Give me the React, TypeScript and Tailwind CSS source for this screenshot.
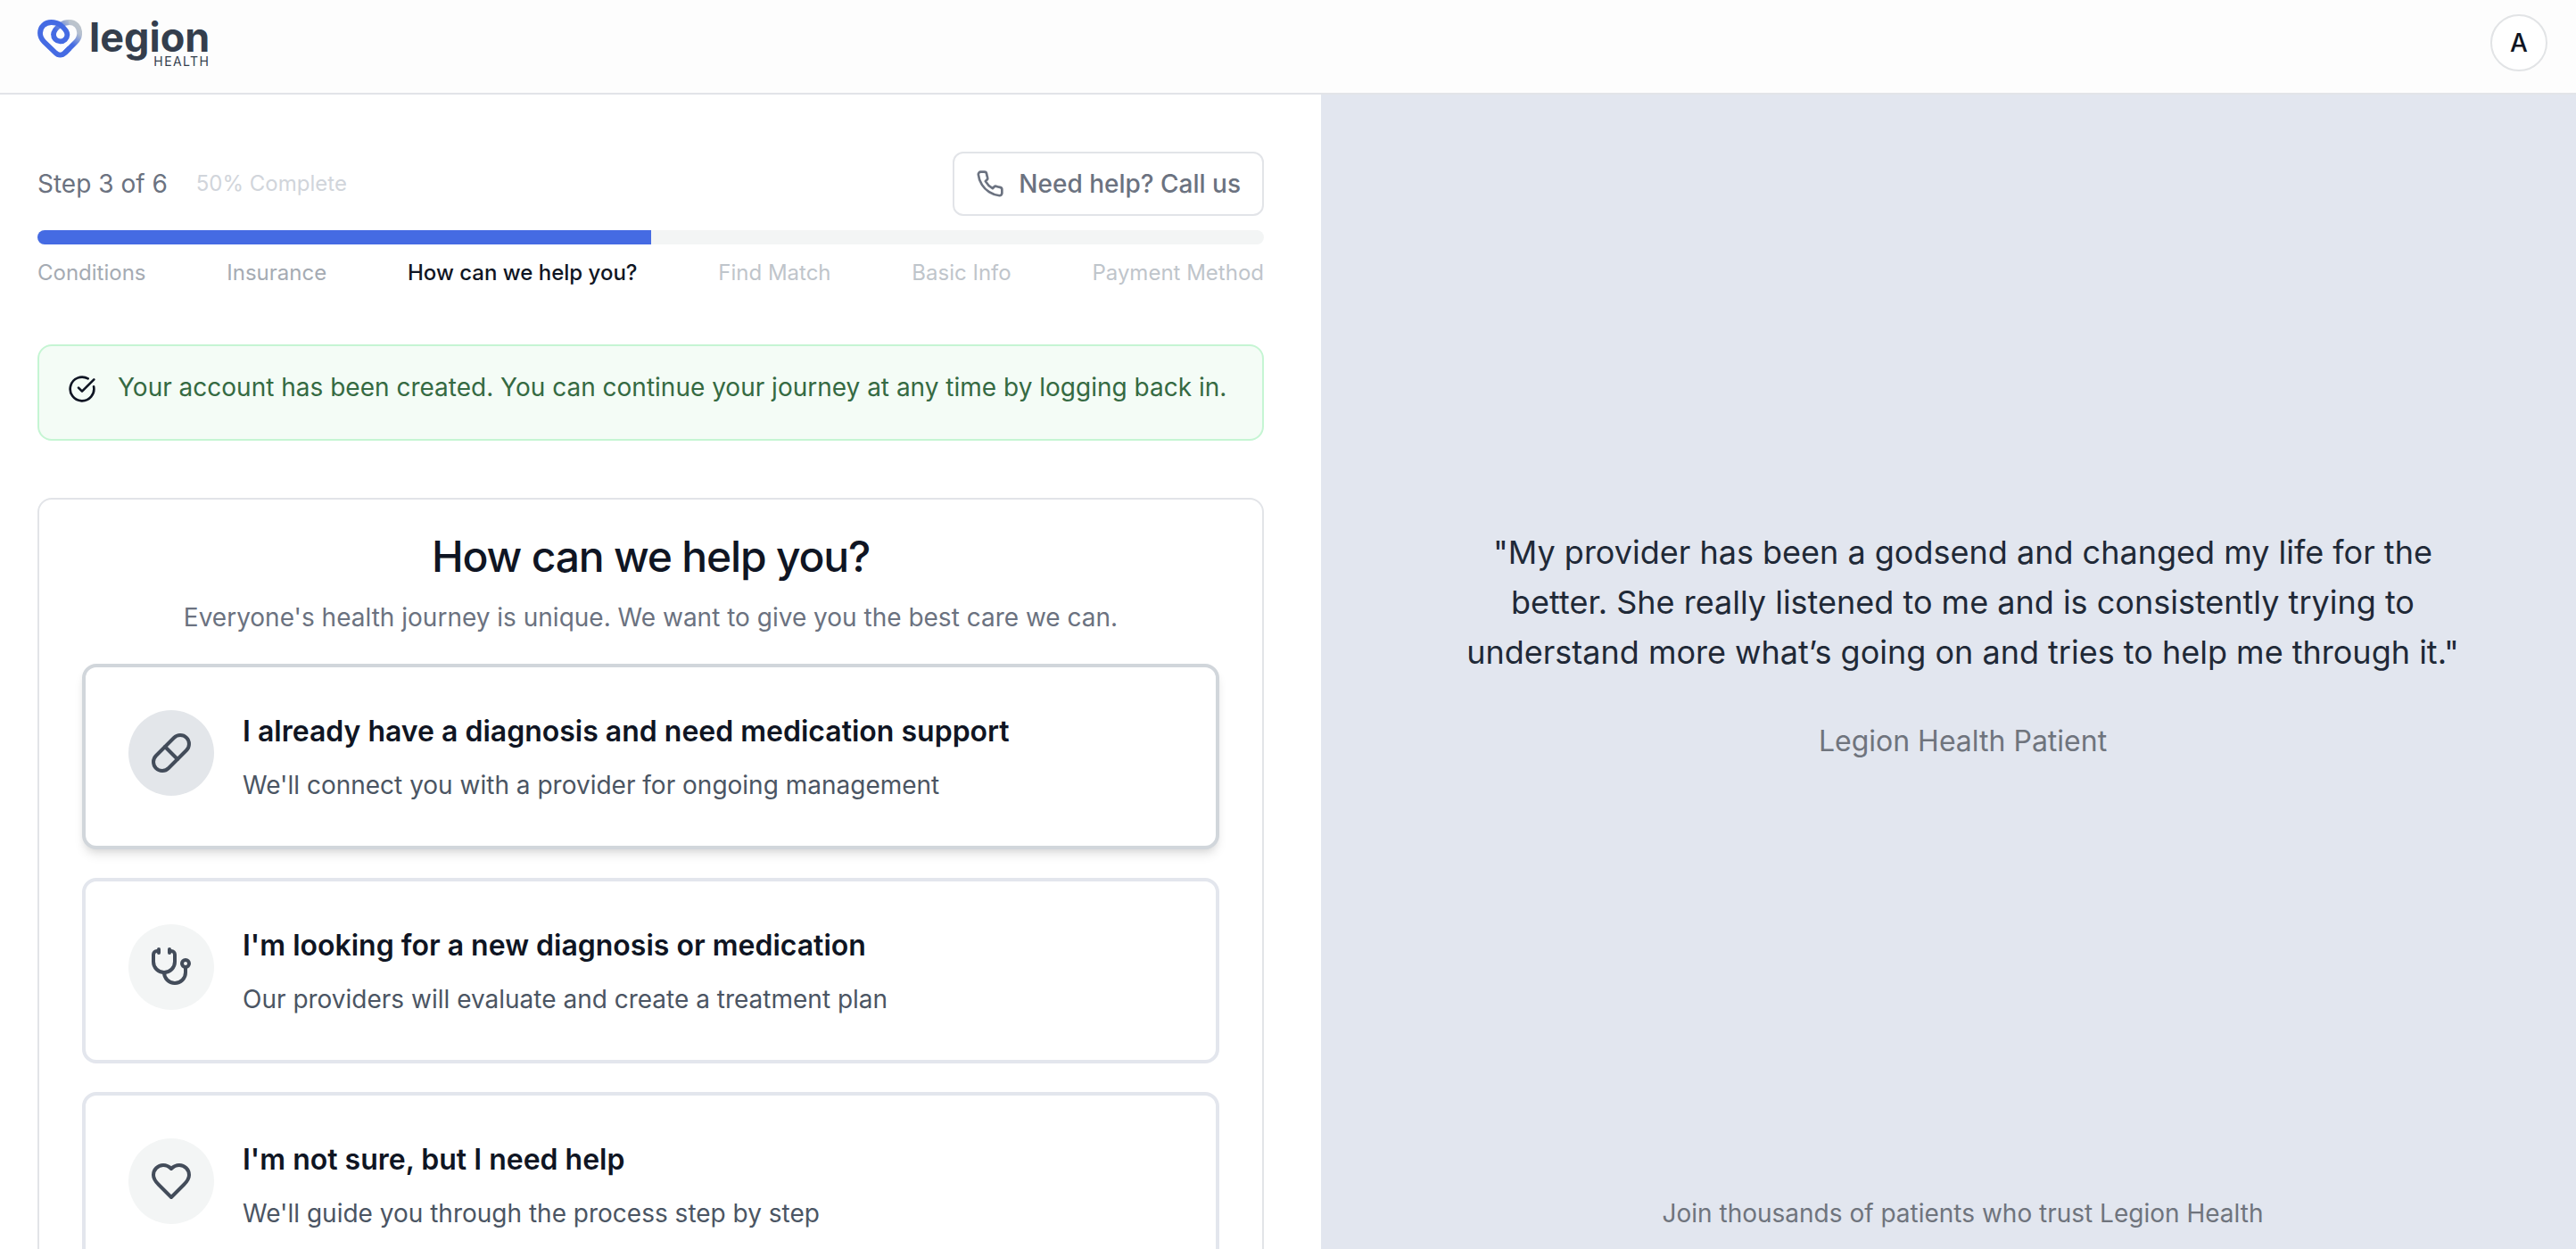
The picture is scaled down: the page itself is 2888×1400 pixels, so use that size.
import { useState, type ReactNode } from "react";
import { clsx } from "clsx";
import { CircleCheckBig, Pill, Stethoscope } from "lucide-react";

const steps = ["Conditions", "Insurance", "How can we help you?", "Find Match", "Basic Info", "Payment Method"];
const currentStep = 3;

function HeartIcon() {
  return (
    <svg viewBox="0 0 24 24" className="size-12" fill="none" stroke="currentColor" strokeWidth="2" strokeLinecap="round" strokeLinejoin="round" aria-hidden="true">
      <path d="M19 14c1.49-1.46 3-3.21 3-5.5A5.5 5.5 0 0 0 16.5 3c-1.76 0-3 .5-4.5 2-1.5-1.5-2.74-2-4.5-2A5.5 5.5 0 0 0 2 8.5c0 2.3 1.5 4.05 3 5.5l7 7Z" />
    </svg>
  );
}

function PhoneIcon() {
  return (
    <svg viewBox="0 0 24 24" className="size-8" fill="none" stroke="currentColor" strokeWidth="2" strokeLinecap="round" strokeLinejoin="round" aria-hidden="true">
      <path d="M22 16.92v3a2 2 0 0 1-2.18 2 19.79 19.79 0 0 1-8.63-3.07 19.5 19.5 0 0 1-6-6 19.79 19.79 0 0 1-3.07-8.67A2 2 0 0 1 4.11 2h3a2 2 0 0 1 2 1.72 12.84 12.84 0 0 0 .7 2.81 2 2 0 0 1-.45 2.11L8.09 9.91a16 16 0 0 0 6 6l1.27-1.27a2 2 0 0 1 2.11-.45 12.84 12.84 0 0 0 2.81.7A2 2 0 0 1 22 16.92z" />
    </svg>
  );
}

function Logo() {
  return (
    <a href="#" className="flex items-start text-[#343e4d]">
      <svg viewBox="0 0 50 43" className="mt-1.5 h-[43px] w-[50px]" fill="none" aria-hidden="true">
        <defs>
          <linearGradient id="heart" gradientUnits="userSpaceOnUse" x1="46" y1="8" x2="34" y2="24">
            <stop offset="0" stopColor="#bcc4cc" />
            <stop offset="0.3" stopColor="#b4bfd0" />
            <stop offset="1" stopColor="#456be3" />
          </linearGradient>
          <linearGradient id="loop" gradientUnits="userSpaceOnUse" x1="36" y1="0" x2="22" y2="14">
            <stop offset="0" stopColor="#bcc4cc" />
            <stop offset="1" stopColor="#456be3" />
          </linearGradient>
        </defs>
        <g strokeWidth="5.8" strokeLinejoin="round">
          <path d="M35.5 3c7 0 11.7 5 11.7 12 0 4-1.2 7-4.200 10L30.5 37.5" stroke="url(#heart)" />
          <path d="M35.8 3c-3.8 0-6.8.8-10.1 3C21.5 9 18 12.5 18 17" stroke="url(#loop)" />
          <path d="M18 16.5a7.7 7.7 0 0 0 15.4.5C33.4 12.5 29.5 9 25.7 6 22.5 3.7 19 3 15.5 3 8.5 3 3 8 3 15c0 4 1.500 7 4.500 10L20 37c3.500 3.600 7.500 3.600 11 0l5-5" stroke="#456be3" />
        </g>
      </svg>
      <span className="ml-2 flex flex-col items-end">
        <span className="text-[45px] leading-[52px] font-bold">legion</span>
        <span className="-mt-1 text-[14px] leading-[10px] tracking-widest">HEALTH</span>
      </span>
    </a>
  );
}

function Progress() {
  return (
    <section>
      <div className="flex items-center justify-between">
        <div className="flex items-center gap-8">
          <span className="text-[28px] leading-10 text-[#6b7280]">Step {currentStep} of {steps.length}</span>
          <span className="text-2xl text-[#d1d5db]">50% Complete</span>
        </div>
        <button type="button" className="flex h-[72px] items-center gap-4 rounded-xl border-2 border-[#e2e4e8] px-6 text-[28px] font-medium text-[#6b7280]">
          <PhoneIcon />
          Need help? Call us
        </button>
      </div>
      <div className="mt-4 h-4 overflow-hidden rounded-full bg-[#f3f5f5]">
        <div className="h-full bg-[#456be3]" style={{ width: `${(currentStep / steps.length) * 100}%` }} />
      </div>
      <ol className="mt-4 flex justify-between text-2xl">
        {steps.map((step, index) => (
          <li
            key={step}
            className={clsx(
              index + 1 < currentStep && "text-[#a5abb3]",
              index + 1 === currentStep && "font-medium text-[#0f1523]",
              index + 1 > currentStep && "text-[#bfc5cb]",
            )}
          >
            {step}
          </li>
        ))}
      </ol>
    </section>
  );
}

type OptionProps = {
  icon: ReactNode;
  title: string;
  description: string;
  active: boolean;
  onSelect: () => void;
};

function Option({ icon, title, description, active, onSelect }: OptionProps) {
  return (
    <button
      type="button"
      onClick={onSelect}
      className={clsx(
        "flex w-full items-start gap-8 rounded-2xl border-4 bg-white p-12 text-left",
        active ? "border-[#d1d6db] shadow-[0_8px_12px_-2px_rgba(0,0,0,0.1),0_4px_8px_-4px_rgba(0,0,0,0.1)]" : "border-[#e3e6ed]",
      )}
    >
      <span className={clsx("flex size-24 shrink-0 items-center justify-center rounded-full text-[#434c5a]", active ? "bg-[#e3e6ea]" : "bg-[#f3f5f5]")}>{icon}</span>
      <span className="flex flex-col gap-4">
        <span className="text-[32px] leading-[48px] font-semibold text-[#0f1523]">{title}</span>
        <span className="text-[28px] leading-10 text-[#4b5563]">{description}</span>
      </span>
    </button>
  );
}

const options = [
  {
    icon: <Pill className="size-12" />,
    title: "I already have a diagnosis and need medication support",
    description: "We'll connect you with a provider for ongoing management",
  },
  {
    icon: <Stethoscope className="size-12" />,
    title: "I'm looking for a new diagnosis or medication",
    description: "Our providers will evaluate and create a treatment plan",
  },
  {
    icon: <HeartIcon />,
    title: "I'm not sure, but I need help",
    description: "We'll guide you through the process step by step",
  },
];

export default function App() {
  const [selected, setSelected] = useState(0);

  return (
    <div className="flex h-screen flex-col overflow-hidden bg-white font-['Inter',sans-serif] text-[#0f1523]">
      <header className="flex shrink-0 items-start justify-between border-b-2 border-[#e2e4e8] bg-[#fdfdfd] pt-4 pr-8 pb-6 pl-[42px]">
        <Logo />
        <button type="button" className="size-16 rounded-full border-2 border-[#e2e4e6] bg-white text-[28px] font-medium">
          A
        </button>
      </header>

      <div className="grid min-h-0 flex-1 grid-cols-[1481fr_1407fr]">
        <main className="space-y-16 overflow-y-auto py-16 pr-16 pl-[42px] [scrollbar-width:none]">
          <Progress />

          <div role="status" className="flex items-start gap-6 rounded-2xl border-2 border-[#c5f5d3] bg-[#f4fcf6] p-8">
            <CircleCheckBig className="size-8 shrink-0" />
            <p className="pb-3 text-[28px] leading-7 text-[#356a42]">
              Your account has been created. You can continue your journey at any time by logging back in.
            </p>
          </div>

          <section className="rounded-2xl border-2 border-[#e2e4e8] px-12 py-8">
            <div className="space-y-4 text-center">
              <h1 className="text-5xl leading-[64px] font-medium tracking-tight">How can we help you?</h1>
              <p className="text-[28px] leading-10 text-[#6b7280]">
                Everyone's health journey is unique. We want to give you the best care we can.
              </p>
            </div>
            <div className="mt-8 space-y-8">
              {options.map((option, index) => (
                <Option key={option.title} {...option} active={index === selected} onSelect={() => setSelected(index)} />
              ))}
            </div>
          </section>
        </main>

        <aside className="flex flex-col items-center bg-[#e2e6ef] pb-5 pl-8 text-center">
          <figure className="flex max-w-6xl flex-1 flex-col justify-center gap-12">
            <blockquote className="text-4xl leading-[56px] text-[#1f2937]">
              "My provider has been a godsend and changed my life for the better. She really listened to me and is consistently trying to understand more what’s going on and tries to help me through it."
            </blockquote>
            <figcaption className="text-[32px] leading-[48px] text-[#6f747d]">Legion Health Patient</figcaption>
          </figure>
          <p className="text-[28px] leading-10 text-[#6f747d]">Join thousands of patients who trust Legion Health</p>
        </aside>
      </div>
    </div>
  );
}
